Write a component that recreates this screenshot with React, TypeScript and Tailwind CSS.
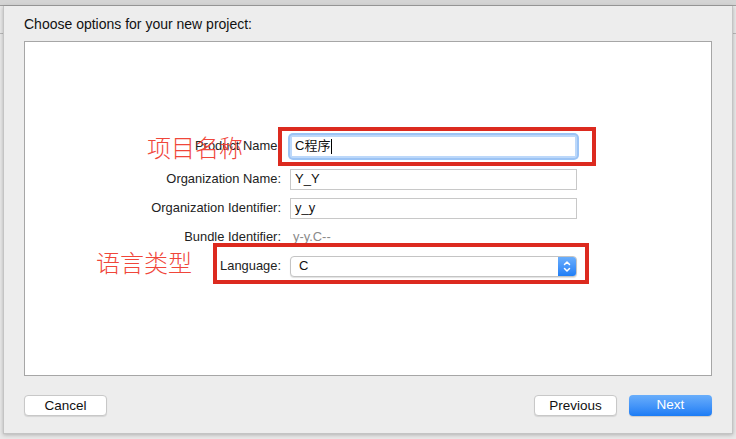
import React from "react";

const ui = { fontFamily: '"Liberation Sans", "Noto Sans CJK SC", Arial, sans-serif' };
const cjk = { fontFamily: '"Noto Sans CJK SC", sans-serif' };

// Ligne du formulaire : libellé aligné à droite + champ
function Row({ label, children, className = "" }: { label: string; children: React.ReactNode; className?: string }) {
  return (
    <div className={`flex h-[22px] items-center ${className}`}>
      <div className="w-[257px] pr-[1px] text-right text-[12.9px] text-[#222]">{label}</div>
      <div className="ml-[8px] w-[287px]">{children}</div>
    </div>
  );
}

function TextField({ value }: { value: string }) {
  return (
    <div className="flex h-[21px] items-center border border-[#c8c8c8] bg-white px-[4px] text-[13px] text-[#111]">
      {value}
    </div>
  );
}

export default function App() {
  return (
    <div className="relative h-[439px] w-[736px] overflow-hidden bg-[#e9e9e9]" style={ui}>
      {/* fenêtre derrière */}
      <div className="h-[6px] border-b border-[#9e9e9e] bg-[#d4d4d4]" />
      <div className="absolute left-0 top-[33px] h-px w-full bg-[#b9b9b9]" />

      {/* feuille */}
      <div className="relative mx-[3px] h-[428px] border-x border-b border-[#c4c4c4] bg-[#ededed] shadow-[0_1px_4px_rgba(0,0,0,0.25)]">
        <div className="px-[20px] pt-[10px]">
          <div className="h-[25px] text-[14px] leading-[17px] text-[#111]">Choose options for your new project:</div>

          <div className="h-[335px] border border-[#a6a6a6] bg-white">
            <div className="pt-[93px]">
              <Row label="Product Name:">
                <div className="rounded-[3px] p-[2px] shadow-[0_0_0_2px_#9cc4f5] bg-[#bcd8fa]">
                  <div className="flex h-[19px] items-center bg-white px-[3px] text-[13px] text-[#111]">
                    C程序<span className="ml-px h-[15px] w-px bg-black" />
                  </div>
                </div>
              </Row>
              <Row label="Organization Name:" className="mt-[11px]">
                <TextField value="Y_Y" />
              </Row>
              <Row label="Organization Identifier:" className="mt-[7px]">
                <TextField value="y_y" />
              </Row>
              <Row label="Bundle Identifier:" className="mt-[7px]">
                <div className="pl-[3px] text-[12.9px] text-[#8a8a8a]">y-y.C--</div>
              </Row>
              <Row label="Language:" className="mt-[7px]">
                <div className="flex h-[21px] items-stretch overflow-hidden rounded-[4px] border border-[#c4c4c4] bg-white shadow-[0_1px_1px_rgba(0,0,0,0.12)]">
                  <div className="flex flex-1 items-center pl-[8px] text-[13px] text-[#111]">C</div>
                  <div className="flex w-[18px] items-center justify-center bg-gradient-to-b from-[#6aaefc] to-[#1e7ef6]">
                    <svg width="8" height="13" viewBox="0 0 8 13" fill="none" stroke="white" strokeWidth="1.5" strokeLinecap="round" strokeLinejoin="round">
                      <path d="M1.5 4.5 L4 2 L6.5 4.5" />
                      <path d="M1.5 8.5 L4 11 L6.5 8.5" />
                    </svg>
                  </div>
                </div>
              </Row>
            </div>
          </div>

          <div className="mt-[19px] flex items-center">
            <button className="h-[21px] w-[83px] rounded-[4px] border border-[#c8c8c8] bg-white text-[13.5px] text-[#111] shadow-[0_1px_1px_rgba(0,0,0,0.1)]">Cancel</button>
            <div className="flex-1" />
            <button className="h-[21px] w-[83px] rounded-[4px] border border-[#c8c8c8] bg-white text-[13.5px] text-[#111] shadow-[0_1px_1px_rgba(0,0,0,0.1)]">Previous</button>
            <button className="ml-[12px] h-[21px] w-[83px] rounded-[4px] bg-gradient-to-b from-[#69aefb] to-[#1a7cf5] text-[13.5px] text-white shadow-[0_1px_1px_rgba(0,0,0,0.15)]">Next</button>
          </div>
        </div>
      </div>

      {/* annotations rouges */}
      <div className="absolute left-[278px] top-[127px] h-[39px] w-[318px] border-[4px] border-[#dc2a1f]" />
      <div className="absolute left-[213px] top-[243px] h-[41px] w-[376px] border-[4px] border-[#dc2a1f]" />
      <div className="absolute left-[147px] top-[132px] text-[24px] font-light leading-[30px] text-[#f0463a]" style={cjk}>项目名称</div>
      <div className="absolute left-[96px] top-[247px] text-[24px] font-light leading-[30px] text-[#f0463a]" style={cjk}>语言类型</div>
    </div>
  );
}
